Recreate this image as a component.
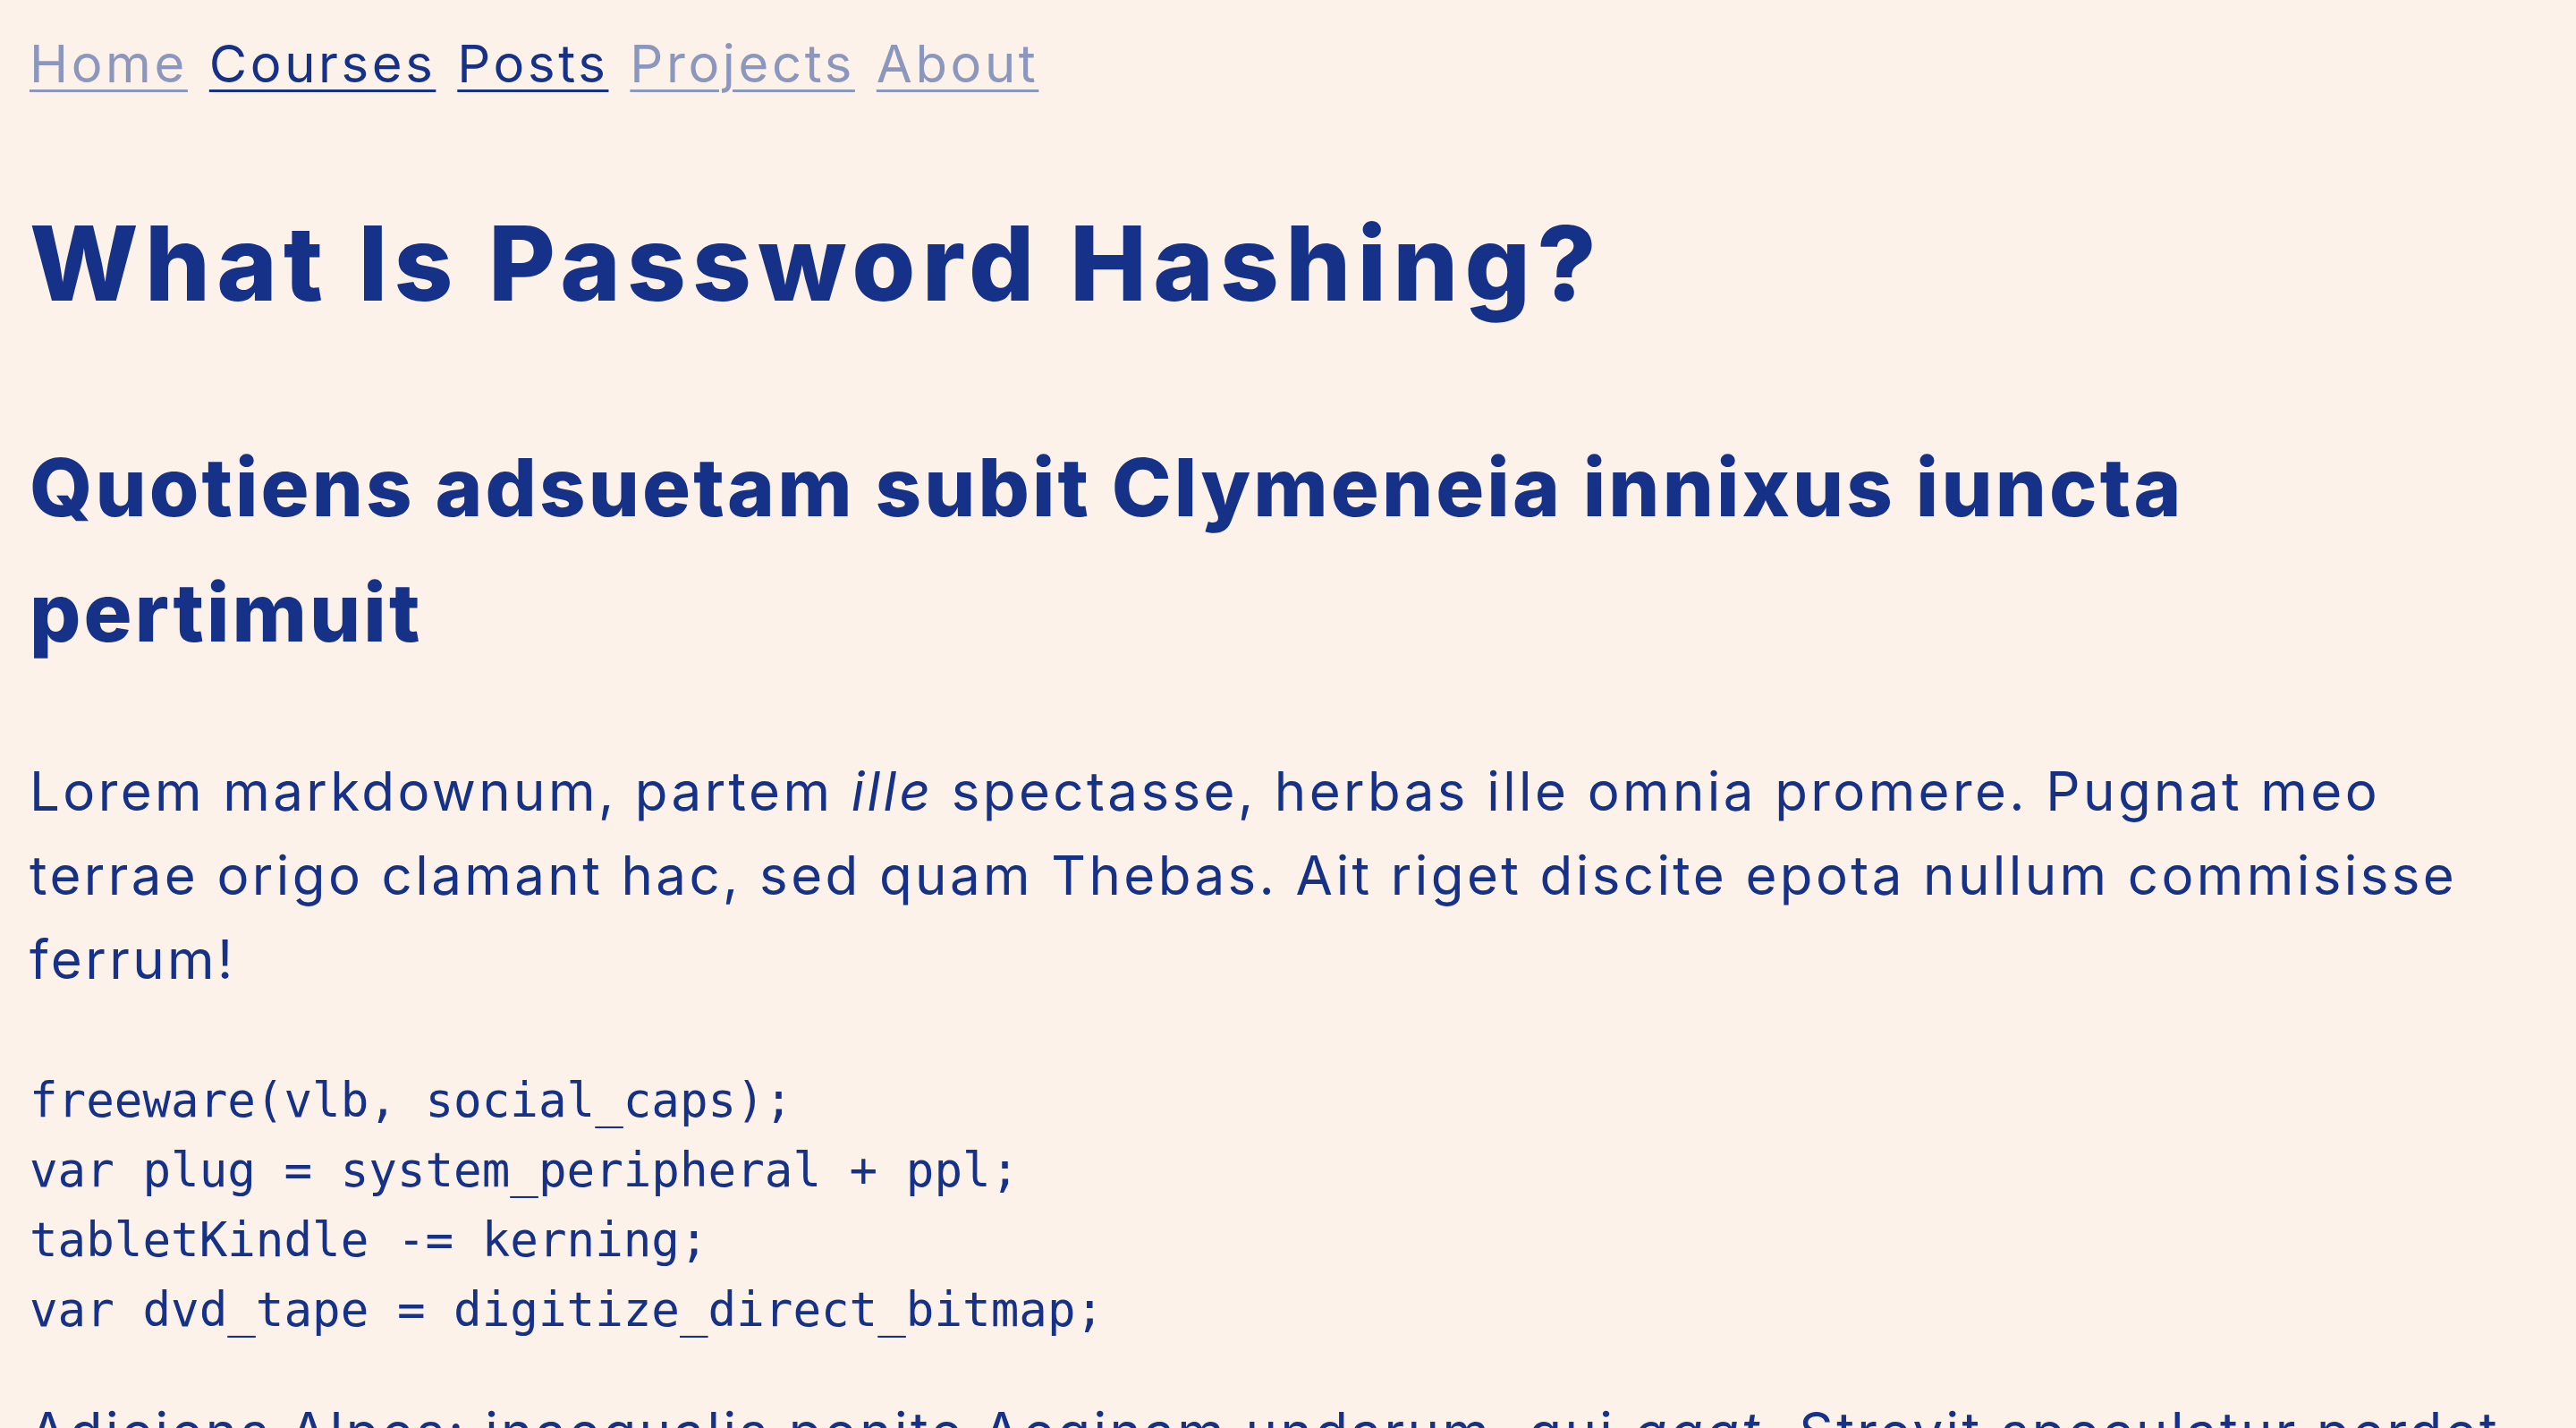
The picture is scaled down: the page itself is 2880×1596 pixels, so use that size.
const links = [
  { label: 'Home', active: false },
  { label: 'Courses', active: true },
  { label: 'Posts', active: true },
  { label: 'Projects', active: false },
  { label: 'About', active: false },
]

const code = [
  'freeware(vlb, social_caps);',
  'var plug = system_peripheral + ppl;',
  'tabletKindle -= kerning;',
  'var dvd_tape = digitize_direct_bitmap;',
]

export default function App() {
  return (
    <div className="min-h-screen bg-[#fdf2ea] text-[#163188] font-['Inter','Noto_Sans',sans-serif] px-[33px] overflow-hidden">
      <main className="max-w-[2790px]">
        <nav className="pt-[28px] text-[58px] leading-[87px] tracking-[3.6px] [word-spacing:4px]">
          {links.map((l, i) => (
            <span key={l.label}>
              <a
                href="#"
                className={`underline decoration-[3px] underline-offset-[8px] ${l.active ? 'text-[#163188]' : 'text-[#8c97bd]'}`}
              >
                {l.label}
              </a>
              {i < links.length - 1 && ' '}
            </span>
          ))}
        </nav>

        <h1 className="mt-[111px] text-[115px] leading-[138px] font-extrabold tracking-[7.2px]">
          What Is Password Hashing?
        </h1>

        <h2 className="mt-[111px] text-[90px] leading-[140px] font-extrabold tracking-[3.1px]">
          Quotiens adsuetam subit Clymeneia innixus iuncta pertimuit
        </h2>

        <p className="mt-[82px] text-[60px] leading-[94px] tracking-[3.4px]">
          Lorem markdownum, partem <em>ille</em> spectasse, herbas ille omnia promere. Pugnat meo
          terrae origo clamant hac, sed quam Thebas. Ait riget discite epota nullum commisisse
          ferrum!
        </p>

        <pre className="mt-[72px] font-['DejaVu_Sans_Mono','Liberation_Mono',monospace] text-[52.5px] leading-[78px]">
          {code.join('\n')}
        </pre>

        <p className="mt-[50px] text-[60px] leading-[94px] tracking-[3.4px]">
          Adiciens Alpes; inaequalis ponite Aeginam undarum, qui <em>agat</em>. Strevit speculatur perdet
          mihi, et dixit tellus; fecit quam tempora.
        </p>
      </main>
    </div>
  )
}
